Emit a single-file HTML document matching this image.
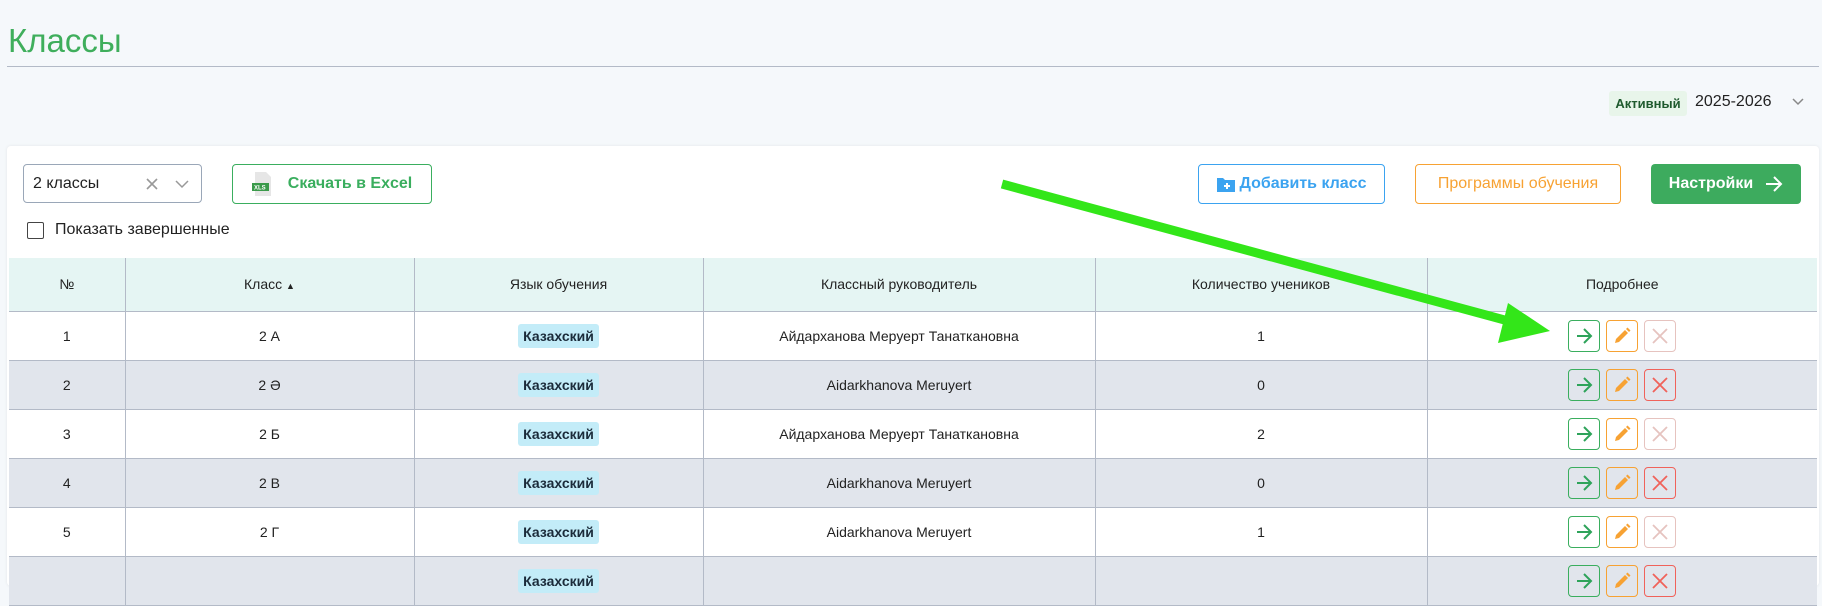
<!DOCTYPE html>
<html><head><meta charset="utf-8"><style>
*{box-sizing:border-box;margin:0;padding:0}
body{width:1822px;height:572px;overflow:hidden;background:#f5f8fb;font-family:"Liberation Sans",sans-serif;color:#222;position:relative}
.abs{position:absolute}
h1{position:absolute;left:8px;top:22px;font-weight:400;font-size:33px;color:#3fae5c}
.hr{left:7px;top:66px;width:1812px;height:1px;background:#b3bac7}
.card{left:7px;top:146px;width:1812px;height:440px;background:#fff;border-radius:4px;box-shadow:0 0 3px rgba(0,0,0,.08)}
.btn{position:absolute;height:40px;border-radius:4px;display:flex;align-items:center;justify-content:center;font-size:16px;font-weight:bold}
table{position:absolute;left:9px;top:258px;border-collapse:collapse;width:1808px;font-size:14px;table-layout:fixed}
th{background:#e5f5f3;height:53px;font-weight:400;border-right:1px solid #b3bac7;border-bottom:1px solid #b3bac7}
td{height:49px;text-align:center;border-right:1px solid #b3bac7;border-bottom:1px solid #b3bac7}
th:last-child,td:last-child{border-right:none}
tr.alt td{background:#e1e5ec}
.lang{display:inline-block;background:#c3ecf8;padding:4px 5px;border-radius:3px;font-weight:bold;font-size:14px;color:#1b2b3a}
.ab{display:inline-block;width:32px;height:32px;border-radius:4px;border:1.5px solid;vertical-align:middle;margin:0 3px;position:relative}
.ab svg{position:absolute;left:5px;top:5px}
</style></head><body>
<h1>Классы</h1>
<div class="abs hr"></div>
<div class="abs" style="left:1609px;top:91px;width:78px;height:25px;background:#e8f5ea;border-radius:3px;font-size:13px;font-weight:bold;color:#1f5a2e;text-align:center;line-height:25px">Активный</div>
<div class="abs" style="left:1695px;top:93px;font-size:16px">2025-2026</div>
<svg class="abs" style="left:1791px;top:97px" width="14" height="10"><path d="M2 2l5 5 5-5" fill="none" stroke="#888" stroke-width="1.5"/></svg>
<div class="abs card"></div>
<div class="abs" style="left:23px;top:164px;width:179px;height:39px;border:1px solid #9aa7b8;border-radius:4px"><span style="position:absolute;left:9px;top:10px;font-size:16px">2 классы</span>
<svg style="position:absolute;left:121px;top:12px" width="14" height="14"><path d="M2 2l10 10M12 2L2 12" stroke="#999" stroke-width="1.6"/></svg>
<svg style="position:absolute;left:150px;top:13px" width="16" height="12"><path d="M2 3l6 6 6-6" fill="none" stroke="#999" stroke-width="1.5"/></svg></div>
<div class="btn" style="left:232px;top:164px;width:200px;border:1.5px solid #3aae5e;color:#3aae5e"><svg width="22" height="26" style="margin-right:14px"><path d="M3 1h11l5 5v19H3z" fill="#e6e6e6"/><rect x="0" y="12" width="17" height="8" fill="#3a9a4a"/><text x="2" y="18.5" font-size="6" fill="#fff" font-family="Liberation Sans">XLS</text></svg>Скачать в Excel</div>
<div class="abs" style="left:27px;top:222px;width:17px;height:17px;border:1.8px solid #444;border-radius:2px"></div>
<div class="abs" style="left:55px;top:221px;font-size:16px">Показать завершенные</div>
<div class="btn" style="left:1198px;top:164px;width:187px;border:1.5px solid #3ba3f0;color:#3ba3f0"><svg width="18" height="16" style="margin-right:5px"><path d="M0 2h6l2 2h10v12H0z" fill="#3ba3f0"/><path d="M10 7v6M7 10h6" stroke="#fff" stroke-width="2"/></svg>Добавить класс</div>
<div class="btn" style="left:1415px;top:164px;width:206px;border:1.5px solid #f7a233;color:#f7a233;font-weight:normal">Программы обучения</div>
<div class="btn" style="left:1651px;top:164px;width:150px;background:#3dab5e;color:#fff">Настройки<svg width="18" height="16" style="margin-left:12px"><path d="M1 8h15M9 1l7 7-7 7" fill="none" stroke="#fff" stroke-width="2"/></svg></div>
<table>
<colgroup><col style="width:116px"><col style="width:289px"><col style="width:289px"><col style="width:392px"><col style="width:332px"><col></colgroup>
<tr><th>№</th><th>Класс <span style="font-size:9px">▲</span></th><th>Язык обучения</th><th>Классный руководитель</th><th>Количество учеников</th><th>Подробнее</th></tr>
<tr><td>1</td><td>2 А</td><td><span class="lang">Казахский</span></td><td>Айдарханова Меруерт Танатканoвна</td><td>1</td><td>ACT1</td></tr>
</table>
<script>
const rows=[["1","2 А","Айдарханова Меруерт Танаткановна","1",0],["2","2 Ә","Aidarkhanova Meruyert","0",1],["3","2 Б","Айдарханова Меруерт Танаткановна","2",0],["4","2 В","Aidarkhanova Meruyert","0",1],["5","2 Г","Aidarkhanova Meruyert","1",0],["","","","",1]];
const t=document.querySelector('table');t.deleteRow(1);
rows.forEach(r=>{const tr=t.insertRow();if(r[4])tr.className='alt';
const del=r[4]?'#f0625a':'#e6c3bf';
const acts=`<span class="ab" style="border-color:#3aae5e"><svg width="20" height="20"><path d="M3 10h14M10 3l7 7-7 7" fill="none" stroke="#2ea35a" stroke-width="2"/></svg></span><span class="ab" style="border-color:#f7a233"><svg width="20" height="20"><path d="M3 17l1-4 9-9 3 3-9 9z" fill="#f7a233"/><path d="M14 3l1.5-1.5 3 3L17 6z" fill="#f7a233"/></svg></span><span class="ab" style="border-color:${del}"><svg width="20" height="20"><path d="M3 3l14 14M17 3L3 17" stroke="${del}" stroke-width="1.8"/></svg></span>`;
tr.innerHTML=`<td>${r[0]}</td><td>${r[1]}</td><td><span class="lang">Казахский</span></td><td>${r[2]}</td><td>${r[3]}</td><td>${acts}</td>`;});
</script>
<svg class="abs" style="left:0;top:0" width="1822" height="572"><path d="M1002 184L1512 322" stroke="#33e619" stroke-width="9"/><path d="M1550 331L1508 303L1498 343z" fill="#33e619"/></svg>
</body></html>
